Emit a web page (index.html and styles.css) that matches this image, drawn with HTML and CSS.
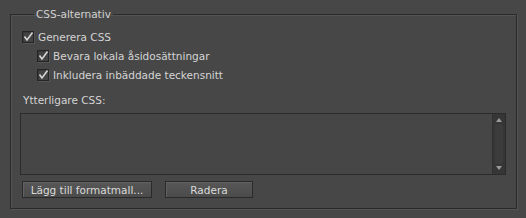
FILE: index.html
```html
<!DOCTYPE html>
<html>
<head>
	<title>CSS-alternativ</title>
	<link rel="stylesheet" href="styles.css">
</head>
<body>
	<fieldset class="group">
		<legend>CSS-alternativ</legend>

		<div class="opt">
			<span class="box"><svg width="12" height="12" viewBox="0 0 12 12"><polyline points="2.5,5.5 5,9 10.5,1.5"/></svg></span>
			<span>Generera CSS</span>
		</div>
		<div class="opt sub">
			<span class="box"><svg width="12" height="12" viewBox="0 0 12 12"><polyline points="2.5,5.5 5,9 10.5,1.5"/></svg></span>
			<span>Bevara lokala åsidosättningar</span>
		</div>
		<div class="opt sub">
			<span class="box"><svg width="12" height="12" viewBox="0 0 12 12"><polyline points="2.5,5.5 5,9 10.5,1.5"/></svg></span>
			<span>Inkludera inbäddade teckensnitt</span>
		</div>

		<div class="field-label">Ytterligare CSS:</div>
		<div class="css-box">
			<div class="css-text"></div>
			<div class="scroll">
				<span class="arrow up"></span>
				<span class="track"></span>
				<span class="arrow down"></span>
			</div>
		</div>

		<div class="buttons">
			<button class="btn wide">Lägg till formatmall...</button>
			<button class="btn narrow">Radera</button>
		</div>
	</fieldset>
</body>
</html>
```

FILE: styles.css
```css
body {
	margin: 0;
	background: #474747;
	color: #d4d4d4;
	font-family: "DejaVu Sans", Verdana, sans-serif;
	font-size: 10.5px;
}

.group {
	margin: 7px 9px 9px 10px;
	padding: 6px 10px 10px 11px;
	border: 1px solid #2a2a2a;
	box-shadow: inset 1px 1px 0 #545454, 1px 1px 0 #545454;
}

.group legend {
	margin-left: 12px;
	padding: 0 2px;
	line-height: 14px;
	color: #d0d0d0;
}

.opt {
	display: flex;
	align-items: center;
	height: 19px;
	gap: 4px;
}

.opt.sub {
	margin-left: 15px;
}

.box {
	width: 12px;
	height: 12px;
	box-sizing: border-box;
	border: 1px solid #252525;
	background: #434343;
	box-shadow: inset 1px 1px 0 #383838, 1px 1px 0 #555;
	position: relative;
}

.box svg {
	position: absolute;
	left: -1px;
	top: -1px;
	overflow: visible;
}

.box polyline {
	fill: none;
	stroke: #d6d6d6;
	stroke-width: 1.6;
}

.field-label {
	margin-top: 9px;
	line-height: 14px;
	padding-left: 1px;
}

.css-box {
	margin: 6px 0 0 -2px;
	width: 486px;
	height: 62px;
	box-sizing: border-box;
	border: 1px solid #2b2b2b;
	background: #464646;
	display: flex;
}

.css-text {
	flex: 1;
}

.scroll {
	width: 13px;
	background: #363636;
	border-left: 1px solid #303030;
	display: flex;
	flex-direction: column;
	align-items: center;
	padding: 4px 0;
	box-sizing: border-box;
}

.arrow {
	width: 0;
	height: 0;
	border-left: 3px solid transparent;
	border-right: 3px solid transparent;
}

.arrow.up {
	border-bottom: 4px solid #9c9c9c;
}

.arrow.down {
	border-top: 4px solid #9c9c9c;
}

.track {
	flex: 1;
	width: 8px;
	margin: 2px 0;
	border-radius: 3px;
	background: #3c3c3c;
}

.buttons {
	display: flex;
	gap: 13px;
	margin-top: 6px;
}

.btn {
	height: 17px;
	padding: 0;
	font-family: inherit;
	font-size: 10.5px;
	color: #dadada;
	background: linear-gradient(#575757, #4b4b4b);
	border: 1px solid #2a2a2a;
	box-shadow: inset 1px 1px 0 #616161;
}

.btn.wide {
	width: 130px;
}

.btn.narrow {
	width: 88px;
}
```
